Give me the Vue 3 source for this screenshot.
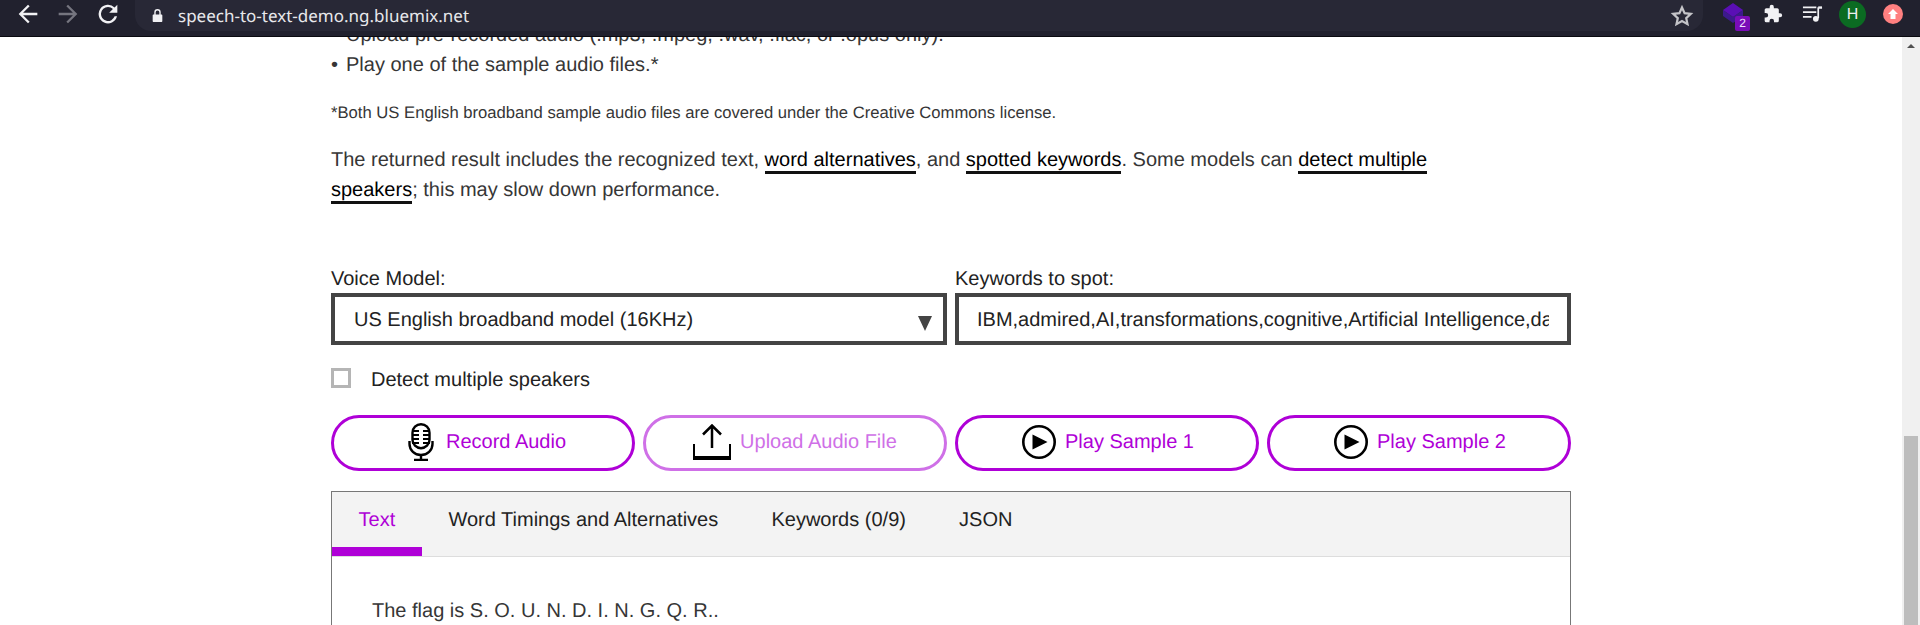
<template>
  <div class="window">
    <header class="toolbar">
      <div class="nav">
        <svg class="nav-icon" viewBox="0 0 24 24"><path d="M20 11H7.800l5.600-5.600L12 4l-8 8 8 8 1.400-1.400L7.800 13H20z" fill="#f1f1f4" /></svg>
        <svg class="nav-icon" viewBox="0 0 24 24"><path d="M4 11h12.200l-5.600-5.600L12 4l8 8-8 8-1.400-1.400 5.600-5.600H4z" fill="#75757f" /></svg>
        <svg class="nav-icon" viewBox="0 0 24 24"><path d="M17.650 6.350A8 8 0 1 0 19.730 14h-2.080A6 6 0 1 1 12 6c1.660 0 3.140.69 4.220 1.780L13 11h7V4z" fill="#f1f1f4" /></svg>
      </div>
      <div class="omnibox">
        <svg class="lock" viewBox="0 0 12 14"><path d="M3 6V4a3 3 0 0 1 6 0v2h.6c.5 0 .9.4.9.9v5.200c0 .5-.4.9-.9.9H2.400c-.5 0-.9-.4-.9-.9V6.900c0-.5.4-.9.900-.9zm1.300 0h3.400V4a1.700 1.700 0 0 0-3.400 0z" fill="#f1f1f4" /></svg>
        <span class="url">speech-to-text-demo.ng.bluemix.net</span>
        <svg class="star" viewBox="0 0 24 24"><path d="M12 3.500l2.600 5.700 6.200.7-4.600 4.200 1.300 6.100L12 17.100l-5.500 3.100 1.300-6.100-4.600-4.200 6.200-.7z" fill="none" stroke="#c4c4c8" stroke-width="2.200" /></svg>
      </div>
      <div class="extensions">
        <div class="ext-stack">
          <svg class="stack-icon" viewBox="0 0 20 20"><path d="M0 7v6l10 7 10-7V7l-10 7z" fill="#3c1a8c" /><path d="M10 0l10 7-10 7L0 7z" fill="#5a0fb5" /></svg>
          <span class="stack-badge">2</span>
        </div>
        <svg class="puzzle" viewBox="0 0 24 24"><path d="M20.500 11H19V7a2 2 0 0 0-2-2h-4V3.500a2.500 2.500 0 0 0-5 0V5H4a2 2 0 0 0-2 2v3.800h1.500a2.700 2.700 0 0 1 0 5.400H2V20a2 2 0 0 0 2 2h3.800v-1.500a2.700 2.700 0 0 1 5.400 0V22H17a2 2 0 0 0 2-2v-4h1.500a2.500 2.500 0 0 0 0-5z" fill="#f1f1f4" /></svg>
        <svg class="queue" viewBox="0 0 22 18"><path d="M1 2h14M1 7h14M1 12h9" stroke="#f1f1f4" stroke-width="1.800" fill="none" /><path d="M17 2v11.500" stroke="#f1f1f4" stroke-width="1.800" /><path d="M17 1h4v2.500h-4z" fill="#f1f1f4" /><circle cx="14.500" cy="14" r="3" fill="#f1f1f4" /></svg>
        <span class="avatar">H</span>
        <span class="update">
          <svg viewBox="0 0 12 12"><path d="M6 1l5 5H8.500v5h-5V6H1z" fill="#fff" /></svg>
        </span>
      </div>
    </header>

    <div class="viewport">
      <main class="page">
        <div class="column">
          <ul class="ways">
            <li>Upload pre-recorded audio (.mp3, .mpeg, .wav, .flac, or .opus only).</li>
            <li>Play one of the sample audio files.*</li>
          </ul>
          <p class="note">*Both US English broadband sample audio files are covered under the Creative Commons license.</p>
          <p class="intro">
            The returned result includes the recognized text, <a class="link">word alternatives</a>, and
            <a class="link">spotted keywords</a>. Some models can <a class="link">detect multiple speakers</a>; this may slow down performance.
          </p>

          <div class="fields">
            <div class="field">
              <label>Voice Model:</label>
              <div class="select-wrap">
                <select class="box">
                  <option>US English broadband model (16KHz)</option>
                </select>
              </div>
            </div>
            <div class="field">
              <label>Keywords to spot:</label>
              <input class="box" type="text" :value="keywords" />
            </div>
          </div>

          <label class="speakers">
            <span class="check"></span>
            Detect multiple speakers
          </label>

          <div class="actions">
            <button class="action">
              <svg class="mic" viewBox="0 0 26 38">
                <rect x="4.500" y="1.200" width="17" height="24" rx="8.500" fill="none" stroke="#000" stroke-width="2.400" />
                <path d="M4 8h7M15 8h7M4 12h7M15 12h7M4 16h7M15 16h7M4 20h7M15 20h7" stroke="#000" stroke-width="2" />
                <path d="M1.500 18v3a11.500 11 0 0 0 23 0v-3" fill="none" stroke="#000" stroke-width="2.400" />
                <path d="M13 32v5M6 37h14" stroke="#000" stroke-width="2.400" />
              </svg>
              Record Audio
            </button>
            <button class="action faded">
              <svg class="upload" viewBox="0 0 38 36">
                <path d="M19 24V2M10 10.500l9-9 9 9" fill="none" stroke="#000" stroke-width="2.500" />
                <path d="M1 20v13.500M37 20v13.500" fill="none" stroke="#000" stroke-width="2" />
                <path d="M0 34h38" stroke="#000" stroke-width="4" />
              </svg>
              Upload Audio File
            </button>
            <button v-for="n in 2" :key="n" class="action">
              <svg class="play" viewBox="0 0 34 34">
                <circle cx="17" cy="17" r="15.700" fill="none" stroke="#000" stroke-width="2.600" />
                <path d="M10.500 9.500l15 7.500-15 7.500z" fill="#000" />
              </svg>
              Play Sample {{ n }}
            </button>
          </div>

          <section class="results">
            <nav class="tabs">
              <a v-for="(tab, i) in tabs" :key="tab" class="tab" :class="{ active: i === 0 }">{{ tab }}</a>
            </nav>
            <p class="transcript">The flag is S. O. U. N. D. I. N. G. Q. R..</p>
          </section>
        </div>
      </main>
      <aside class="scrollbar">
        <span class="arrow"></span>
        <span class="thumb"></span>
      </aside>
    </div>
  </div>
</template>

<script setup>
const keywords = 'IBM,admired,AI,transformations,cognitive,Artificial Intelligence,data science,Jeopardy'
const tabs = ['Text', 'Word Timings and Alternatives', 'Keywords (0/9)', 'JSON']
</script>

<style>
html, body {
  margin: 0;
  height: 625px;
  overflow: hidden;
  background: #fff;
}
</style>

<style scoped>
.window {
  height: 625px;
  display: flex;
  flex-direction: column;
  font-family: "Liberation Sans", Arial, sans-serif;
  color: #363636;
  overflow: hidden;
  text-rendering: geometricPrecision;
}

.toolbar {
  height: 36px;
  flex: none;
  background: #21212e;
  border-bottom: 1px solid #0a0a10;
  display: flex;
  align-items: flex-start;
}

.nav {
  display: flex;
  gap: 12px;
  padding-left: 14px;
  width: 135px;
  box-sizing: border-box;
  flex: none;
}

.nav-icon {
  width: 28px;
  height: 28px;
}

.omnibox {
  flex: 1;
  height: 31px;
  background: #282836;
  border-radius: 0 0 16px 16px;
  display: flex;
  align-items: center;
  padding-right: 10px;
}

.lock {
  margin-left: 16px;
  width: 13px;
  height: 15px;
  flex: none;
}

.url {
  margin-left: 14px;
  font-family: "Noto Sans", sans-serif;
  font-size: 17px;
  color: #e8e8ec;
  white-space: nowrap;
}

.star {
  margin-left: auto;
  margin-right: -1px;
  width: 24px;
  height: 24px;
}

.extensions {
  flex: none;
  display: flex;
  align-items: center;
  height: 28px;
  padding-left: 20px;
  padding-right: 17px;
}

.ext-stack {
  position: relative;
  width: 27px;
  height: 28px;
  margin-top: 6px;
}

.stack-icon {
  display: block;
  width: 20px;
  height: 20px;
}

.stack-badge {
  position: absolute;
  right: 0;
  bottom: 0;
  width: 15px;
  height: 15px;
  background: #7a0cb8;
  border-radius: 2px;
  font-size: 12px;
  line-height: 15px;
  text-align: center;
  color: #f0e0ff;
}

.puzzle {
  width: 20px;
  height: 20px;
  margin-left: 13px;
}

.queue {
  width: 21px;
  height: 18px;
  margin-left: 19px;
}

.avatar {
  width: 27px;
  height: 27px;
  margin-left: 16px;
  border-radius: 50%;
  background: #0b6b22;
  color: #eee;
  font-size: 16px;
  line-height: 27px;
  text-align: center;
}

.update {
  width: 20px;
  height: 20px;
  margin-left: 17px;
  border-radius: 50%;
  background: #ff8080;
  display: flex;
  align-items: center;
  justify-content: center;
}

.update svg {
  width: 12px;
  height: 12px;
}

.viewport {
  flex: 1;
  display: flex;
  min-height: 0;
}

.page {
  flex: 1;
  overflow: hidden;
  padding-left: 331px;
}

.column {
  width: 1240px;
  font-size: 20px;
  line-height: 30px;
}

.ways {
  list-style: none;
  margin: -17px 0 0;
  padding: 0 0 0 15px;
}

.ways li {
  position: relative;
}

.ways li::before {
  content: "•";
  position: absolute;
  left: -15px;
}

.note {
  margin: 18px 0 0;
  font-size: 16.650px;
  line-height: 30px;
}

.intro {
  margin: 17px 0 0;
  width: 1180px;
}

.link {
  color: #000;
  border-bottom: 3px solid #111;
}

.fields {
  display: grid;
  grid-template-columns: 616px 616px;
  column-gap: 8px;
  margin-top: 59px;
}

.field {
  display: flex;
  flex-direction: column;
}

.field label {
  color: #222;
  line-height: 30px;
  margin-bottom: -1px;
}

.box {
  box-sizing: border-box;
  width: 100%;
  height: 52px;
  border: 4px solid #444;
  background: #fff;
  padding: 2px 18px 0;
  font: inherit;
  text-rendering: inherit;
  color: #222;
  border-radius: 0;
  appearance: none;
  outline: none;
}

select.box {
  padding-left: 19px;
}

.select-wrap {
  position: relative;
}

.select-wrap::after {
  content: "";
  position: absolute;
  right: 15px;
  top: 23px;
  border-left: 7px solid transparent;
  border-right: 7px solid transparent;
  border-top: 15px solid #444;
}

.speakers {
  display: flex;
  align-items: center;
  gap: 20px;
  margin-top: 20px;
  color: #222;
}

.check {
  box-sizing: border-box;
  width: 20px;
  height: 20px;
  border: 3px solid #b5b5b5;
  margin-top: -4px;
}

.actions {
  display: grid;
  grid-template-columns: repeat(4, 1fr);
  column-gap: 8px;
  margin-top: 20px;
}

.action {
  height: 56px;
  border: 3px solid #af00d7;
  border-radius: 28px;
  background: #fff;
  color: #af00d7;
  font: inherit;
  text-rendering: inherit;
  display: flex;
  align-items: center;
  justify-content: center;
  gap: 9px;
  padding: 0 0 2px;
}

.action.faded {
  border-color: #cf70e7;
  color: #cf70e7;
}

.mic {
  width: 26px;
  height: 38px;
  margin-left: 8px;
  margin-right: 3px;
}

.upload {
  width: 38px;
  height: 36px;
}

.play {
  width: 34px;
  height: 34px;
  margin-left: 2px;
}

.results {
  margin-top: 20px;
  border: 1px solid #777;
  border-bottom: 0;
  padding-bottom: 40px;
}

.tabs {
  height: 64px;
  background: #f3f3f3;
  border-bottom: 1px solid #ddd;
  display: flex;
  color: #222;
}

.tab {
  padding: 0 26.600px;
  line-height: 56px;
  box-sizing: border-box;
  height: 64px;
}

.tab.active {
  color: #af00d7;
  border-bottom: 9px solid #af00d7;
}

.transcript {
  margin: 39px 0 0 40px;
}

.scrollbar {
  width: 18px;
  flex: none;
  background: #f0f0f0;
  position: relative;
}

.arrow {
  position: absolute;
  top: 7px;
  left: 5px;
  border-left: 4px solid transparent;
  border-right: 4px solid transparent;
  border-bottom: 4px solid #505050;
}

.thumb {
  position: absolute;
  left: 2px;
  right: 2px;
  top: 399px;
  bottom: 0;
  background: #bdbdbd;
}
</style>
